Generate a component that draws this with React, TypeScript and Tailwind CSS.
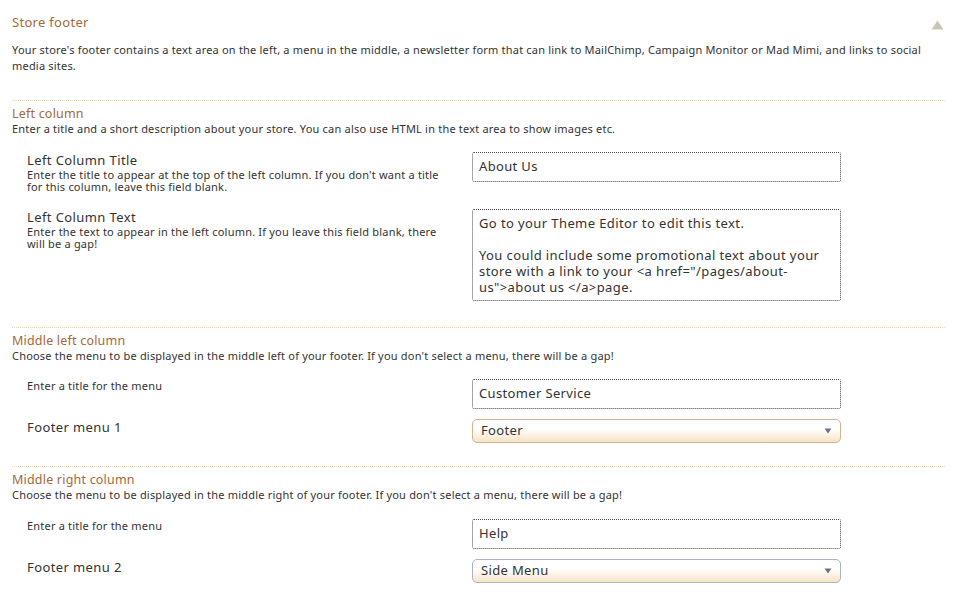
import React from "react";

const font = { fontFamily: '"Noto Sans", "Open Sans", sans-serif' };

function Sep() {
  return <div className="mx-3 border-t border-dotted border-[#ecd3ad]" />;
}

function SectionHead({ title, desc }: { title: string; desc: string }) {
  return (
    <div className="px-3">
      <div className="text-[12.5px] leading-[15px] tracking-[0.2px] text-[#a3693a]">{title}</div>
      <div className="text-[11px] leading-[15px] tracking-[0.2px] text-[#333]">{desc}</div>
    </div>
  );
}

function Input({ value }: { value: string }) {
  return (
    <div className="w-[369px] h-[30px] border border-dotted border-[#4a4a55] rounded-[2px] px-[6px] flex items-center text-[13px] tracking-[0.35px] text-[#333]">
      {value}
    </div>
  );
}

function Select({ value, orange }: { value: string; orange?: boolean }) {
  return (
    <div
      className={`w-[369px] h-[24px] rounded-[5px] border ${orange ? "border-[#d2b392]" : "border-[#a9b3c4]"} px-[8px] flex items-center justify-between text-[13px] tracking-[0.35px] text-[#333] bg-gradient-to-b from-white from-40% to-[#f8e3c6]`}
    >
      <span>{value}</span>
      <svg width="8" height="6" viewBox="0 0 8 6">
        <path d="M0.5 0.5 L7.5 0.5 L4 5.5 Z" fill="#6b7386" />
      </svg>
    </div>
  );
}

export default function App() {
  return (
    <div className="w-[957px] h-[602px] bg-white overflow-hidden text-[#333]" style={font}>
      <div className="flex items-center justify-between px-3 pt-[13px]">
        <div className="text-[13px] leading-[18px] tracking-[0.3px] text-[#a3693a]">Store footer</div>
        <svg width="13" height="10" viewBox="0 0 13 10" className="mr-[1px] mt-[6px]">
          <path d="M6.5 0.5 L12.5 9.5 L0.5 9.5 Z" fill="#d3c4a8" />
          <path d="M6.5 3 L9.5 8 L3.5 8 Z" fill="#b9c5d4" />
        </svg>
      </div>
      <div className="px-3 pt-[11px] text-[11px] leading-[16px] tracking-[0.2px] pr-[30px]">
        Your store's footer contains a text area on the left, a menu in the middle, a newsletter form that can link to MailChimp, Campaign Monitor or Mad Mimi, and links to social media sites.
      </div>
      <div className="h-[26px]" />
      <Sep />
      <div className="pt-[5px]">
        <SectionHead
          title="Left column"
          desc="Enter a title and a short description about your store. You can also use HTML in the text area to show images etc."
        />
      </div>
      <div className="flex pt-[16px] pl-[27px]">
        <div className="w-[445px] pr-[32px]">
          <div className="text-[13px] leading-[16px] tracking-[0.4px] text-[#333]">Left Column Title</div>
          <div className="mt-[1px] text-[11px] leading-[12px] tracking-[0.2px]">
            Enter the title to appear at the top of the left column. If you don't want a title for this column, leave this field blank.
          </div>
        </div>
        <Input value="About Us" />
      </div>
      <div className="flex pt-[16px] pl-[27px]">
        <div className="w-[445px] pr-[32px]">
          <div className="text-[13px] leading-[16px] tracking-[0.4px]">Left Column Text</div>
          <div className="mt-[1px] text-[11px] leading-[12px] tracking-[0.2px]">
            Enter the text to appear in the left column. If you leave this field blank, there will be a gap!
          </div>
        </div>
        <div className="w-[369px] h-[92px] border border-dotted border-[#4a4a55] rounded-[2px] px-[6px] pt-[5px] text-[13px] leading-[16px] tracking-[0.4px]">
          <div>Go to your Theme Editor to edit this text.</div>
          <div className="h-[16px]" />
          <div>
            You could include some promotional text about your store with a link to your &lt;a href="/pages/about-us"&gt;about us &lt;/a&gt;page.
          </div>
        </div>
      </div>
      <div className="h-[26px]" />
      <Sep />
      <div className="pt-[5px]">
        <SectionHead
          title="Middle left column"
          desc="Choose the menu to be displayed in the middle left of your footer. If you don't select a menu, there will be a gap!"
        />
      </div>
      <div className="flex pt-[16px] pl-[27px]">
        <div className="w-[445px] text-[11px] leading-[12px] tracking-[0.2px] pt-[1px]">Enter a title for the menu</div>
        <Input value="Customer Service" />
      </div>
      <div className="flex pt-[10px] pl-[27px]">
        <div className="w-[445px] text-[13px] leading-[16px] tracking-[0.4px]">Footer menu 1</div>
        <Select value="Footer" orange />
      </div>
      <div className="h-[23px]" />
      <Sep />
      <div className="pt-[5px]">
        <SectionHead
          title="Middle right column"
          desc="Choose the menu to be displayed in the middle right of your footer. If you don't select a menu, there will be a gap!"
        />
      </div>
      <div className="flex pt-[17px] pl-[27px]">
        <div className="w-[445px] text-[11px] leading-[12px] tracking-[0.2px] pt-[1px]">Enter a title for the menu</div>
        <Input value="Help" />
      </div>
      <div className="flex pt-[10px] pl-[27px]">
        <div className="w-[445px] text-[13px] leading-[16px] tracking-[0.4px]">Footer menu 2</div>
        <Select value="Side Menu" />
      </div>
    </div>
  );
}
